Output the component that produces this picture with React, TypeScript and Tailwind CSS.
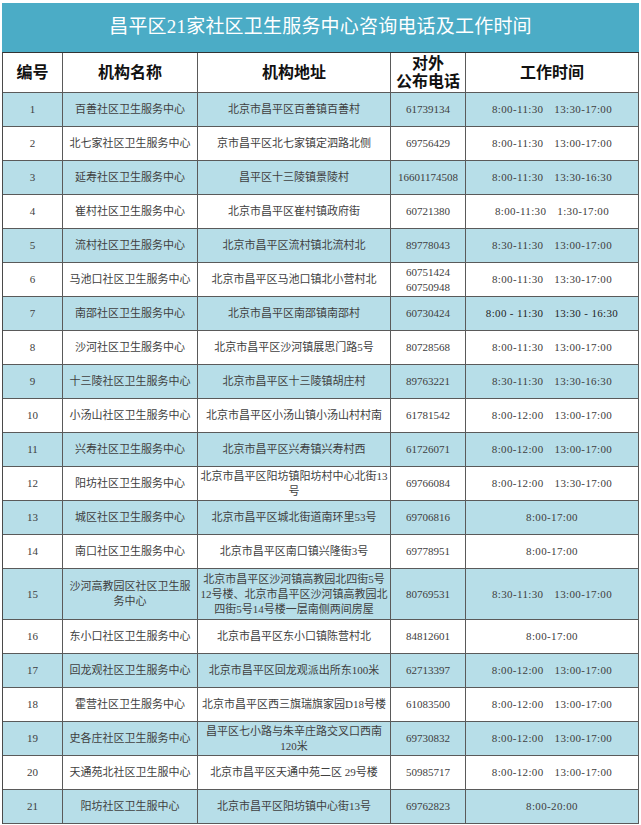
type Row = {
  no: number
  name: React.ReactNode
  addr: React.ReactNode
  tel: React.ReactNode
  time: [string, string?]
  tall?: boolean
}

const rows: Row[] = [
  { no: 1, name: "百善社区卫生服务中心", addr: "北京市昌平区百善镇百善村", tel: "61739134", time: ["8:00-11:30", "13:30-17:00"] },
  { no: 2, name: "北七家社区卫生服务中心", addr: "京市昌平区北七家镇定泗路北侧", tel: "69756429", time: ["8:00-11:30", "13:00-17:00"] },
  { no: 3, name: "延寿社区卫生服务中心", addr: "昌平区十三陵镇景陵村", tel: "16601174508", time: ["8:00-11:30", "13:30-16:30"] },
  { no: 4, name: "崔村社区卫生服务中心", addr: "北京市昌平区崔村镇政府街", tel: "60721380", time: ["8:00-11:30", "1:30-17:00"] },
  { no: 5, name: "流村社区卫生服务中心", addr: "北京市昌平区流村镇北流村北", tel: "89778043", time: ["8:30-11:30", "13:00-17:00"] },
  {
    no: 6,
    name: "马池口社区卫生服务中心",
    addr: "北京市昌平区马池口镇北小营村北",
    tel: (
      <>
        60751424
        <br />
        60750948
      </>
    ),
    time: ["8:00-11:30", "13:30-17:00"],
  },
  { no: 7, name: "南邵社区卫生服务中心", addr: "北京市昌平区南邵镇南邵村", tel: "60730424", time: ["8:00 - 11:30", "13:30 - 16:30"] },
  { no: 8, name: "沙河社区卫生服务中心", addr: "北京市昌平区沙河镇展思门路5号", tel: "80728568", time: ["8:00-11:30", "13:00-17:00"] },
  { no: 9, name: "十三陵社区卫生服务中心", addr: "北京市昌平区十三陵镇胡庄村", tel: "89763221", time: ["8:30-11:30", "13:30-16:30"] },
  { no: 10, name: "小汤山社区卫生服务中心", addr: "北京市昌平区小汤山镇小汤山村村南", tel: "61781542", time: ["8:00-12:00", "13:00-17:00"] },
  { no: 11, name: "兴寿社区卫生服务中心", addr: "北京市昌平区兴寿镇兴寿村西", tel: "61726071", time: ["8:00-12:00", "13:00-17:00"] },
  {
    no: 12,
    name: "阳坊社区卫生服务中心",
    addr: (
      <>
        北京市昌平区阳坊镇阳坊村中心北街13
        <br />号
      </>
    ),
    tel: "69766084",
    time: ["8:00-12:00", "13:30-17:00"],
  },
  { no: 13, name: "城区社区卫生服务中心", addr: "北京市昌平区城北街道南环里53号", tel: "69706816", time: ["8:00-17:00"] },
  { no: 14, name: "南口社区卫生服务中心", addr: "北京市昌平区南口镇兴隆街3号", tel: "69778951", time: ["8:00-17:00"] },
  {
    no: 15,
    name: (
      <>
        沙河高教园区社区卫生服
        <br />
        务中心
      </>
    ),
    addr: (
      <>
        北京市昌平区沙河镇高教园北四街5号
        <br />
        12号楼、北京市昌平区沙河镇高教园北
        <br />
        四街5号14号楼一层南侧两间房屋
      </>
    ),
    tel: "80769531",
    time: ["8:30-11:30", "13:00-17:00"],
    tall: true,
  },
  { no: 16, name: "东小口社区卫生服务中心", addr: "北京市昌平区东小口镇陈营村北", tel: "84812601", time: ["8:00-17:00"] },
  { no: 17, name: "回龙观社区卫生服务中心", addr: "北京市昌平区回龙观派出所东100米", tel: "62713397", time: ["8:00-12:00", "13:00-17:00"] },
  { no: 18, name: "霍营社区卫生服务中心", addr: "北京市昌平区西三旗瑞旗家园D18号楼", tel: "61083500", time: ["8:00-12:00", "13:00-17:00"] },
  {
    no: 19,
    name: "史各庄社区卫生服务中心",
    addr: (
      <>
        昌平区七小路与朱辛庄路交叉口西南
        <br />
        120米
      </>
    ),
    tel: "69730832",
    time: ["8:00-12:00", "13:00-17:00"],
  },
  { no: 20, name: "天通苑北社区卫生服中心", addr: "北京市昌平区天通中苑二区 29号楼", tel: "50985717", time: ["8:00-12:00", "13:00-17:00"] },
  { no: 21, name: "阳坊社区卫生服中心", addr: "北京市昌平区阳坊镇中心街13号", tel: "69762823", time: ["8:00-20:00"] },
]

const cell = "flex items-center justify-center text-center border-r border-b border-[#5a5a5a]"
const cols = "grid grid-cols-[60px_135px_193px_75px_173px] border-l border-[#4a4a4a]"

export default function App() {
  return (
    <div className="w-[641px] h-[825px] bg-white pt-[3px] pl-[2px] overflow-hidden font-['Liberation_Serif','Noto_Sans_CJK_SC',serif]">
      <div className="w-[637px]">
        {/* title band */}
        <div className="h-[49px] bg-[#4bacc6] flex items-center justify-center">
          <h1 className="text-white text-[19px] tracking-[0.2px] font-normal">昌平区21家社区卫生服务中心咨询电话及工作时间</h1>
        </div>

        {/* header row */}
        <div className={`${cols} h-[41px] border-t border-t-[#333] text-[16px] font-bold text-[#111]`}>
          <div className={cell}>编号</div>
          <div className={cell}>机构名称</div>
          <div className={cell}>机构地址</div>
          <div className={`${cell} leading-[18px]`}>
            对外
            <br />
            公布电话
          </div>
          <div className={cell}>工作时间</div>
        </div>

        {rows.map((r) => (
          <div
            key={r.no}
            className={`${cols} ${r.tall ? "h-[51px]" : "h-[34px]"} ${r.no % 2 ? "bg-[#b7dee8]" : "bg-white"} text-[11px] leading-[15px] text-[#404040]`}
          >
            <div className={cell}>{r.no}</div>
            <div className={cell}>{r.name}</div>
            <div className={`${cell} px-[2px]`}>{r.addr}</div>
            <div className={cell}>{r.tel}</div>
            <div className={`${cell} gap-[11px] tracking-[0.35px] ${r.no === 7 ? "text-[#1f1f1f]" : ""}`}>
              <span className="whitespace-pre">{r.time[0]}</span>
              {r.time[1] && <span className="whitespace-pre">{r.time[1]}</span>}
            </div>
          </div>
        ))}
      </div>
    </div>
  )
}
